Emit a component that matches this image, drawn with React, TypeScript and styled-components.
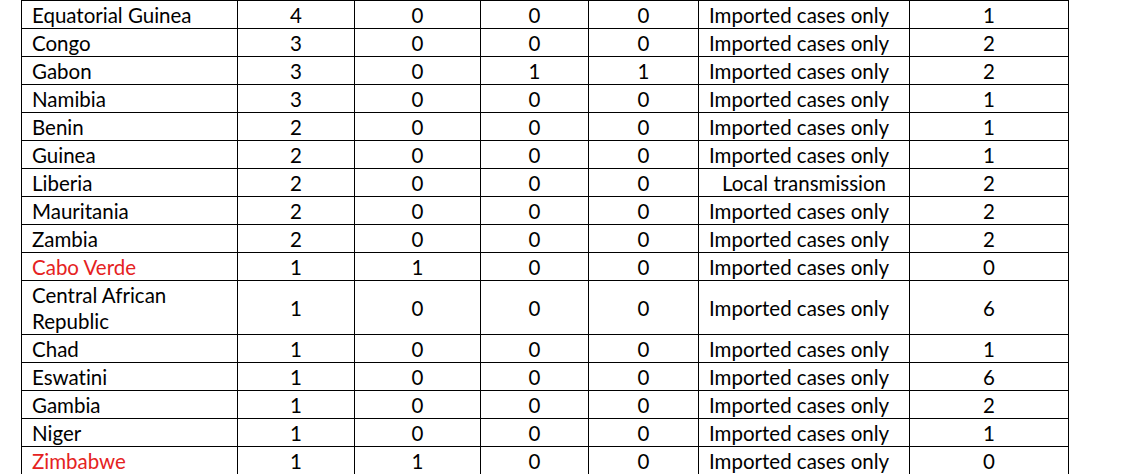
import React from 'react';
import styled, { createGlobalStyle } from 'styled-components';

type Row = {
    country: string;
    cases: number;
    imported: number;
    deaths: number;
    recovered: number;
    transmission: string;
    days: number;
    highlight?: boolean;
};

const rows: Row[] = [
    { country: 'Equatorial Guinea', cases: 4, imported: 0, deaths: 0, recovered: 0, transmission: 'Imported cases only', days: 1 },
    { country: 'Congo', cases: 3, imported: 0, deaths: 0, recovered: 0, transmission: 'Imported cases only', days: 2 },
    { country: 'Gabon', cases: 3, imported: 0, deaths: 1, recovered: 1, transmission: 'Imported cases only', days: 2 },
    { country: 'Namibia', cases: 3, imported: 0, deaths: 0, recovered: 0, transmission: 'Imported cases only', days: 1 },
    { country: 'Benin', cases: 2, imported: 0, deaths: 0, recovered: 0, transmission: 'Imported cases only', days: 1 },
    { country: 'Guinea', cases: 2, imported: 0, deaths: 0, recovered: 0, transmission: 'Imported cases only', days: 1 },
    { country: 'Liberia', cases: 2, imported: 0, deaths: 0, recovered: 0, transmission: 'Local transmission', days: 2 },
    { country: 'Mauritania', cases: 2, imported: 0, deaths: 0, recovered: 0, transmission: 'Imported cases only', days: 2 },
    { country: 'Zambia', cases: 2, imported: 0, deaths: 0, recovered: 0, transmission: 'Imported cases only', days: 2 },
    { country: 'Cabo Verde', cases: 1, imported: 1, deaths: 0, recovered: 0, transmission: 'Imported cases only', days: 0, highlight: true },
    { country: 'Central African Republic', cases: 1, imported: 0, deaths: 0, recovered: 0, transmission: 'Imported cases only', days: 6 },
    { country: 'Chad', cases: 1, imported: 0, deaths: 0, recovered: 0, transmission: 'Imported cases only', days: 1 },
    { country: 'Eswatini', cases: 1, imported: 0, deaths: 0, recovered: 0, transmission: 'Imported cases only', days: 6 },
    { country: 'Gambia', cases: 1, imported: 0, deaths: 0, recovered: 0, transmission: 'Imported cases only', days: 2 },
    { country: 'Niger', cases: 1, imported: 0, deaths: 0, recovered: 0, transmission: 'Imported cases only', days: 1 },
    { country: 'Zimbabwe', cases: 1, imported: 1, deaths: 0, recovered: 0, transmission: 'Imported cases only', days: 0, highlight: true },
];

// column widths measured off the grid lines
const widths = [216, 117, 126, 108, 110, 211, 159];

const App = () => {
    return (
        <>
            <GlobalStyle />
            <Page>
                <Table>
                    <colgroup>
                        {widths.map((w, i) => <col key={i} style={{ width: w }} />)}
                    </colgroup>
                    <tbody>
                        {rows.map(row => (
                            <tr key={row.country}>
                                <CountryCell $red={row.highlight}>
                                    {row.country === 'Central African Republic'
                                        ? <>Central African<br />Republic</>
                                        : row.country}
                                </CountryCell>
                                <NumberCell>{row.cases}</NumberCell>
                                <NumberCell>{row.imported}</NumberCell>
                                <NumberCell>{row.deaths}</NumberCell>
                                <NumberCell>{row.recovered}</NumberCell>
                                <TransmissionCell $center={row.transmission !== 'Imported cases only'}>
                                    {row.transmission}
                                </TransmissionCell>
                                <NumberCell>{row.days}</NumberCell>
                            </tr>
                        ))}
                    </tbody>
                </Table>
            </Page>
        </>
    );
};

export default App;

const GlobalStyle = createGlobalStyle`
    body {
        margin: 0;
        background: #ffffff;
    }
`;

const Page = styled.div`
    padding: 0 0 0 21px;
    width: 1125px;
    height: 474px;
    overflow: hidden;
    box-sizing: border-box;
`;

const Table = styled.table`
    border-collapse: collapse;
    table-layout: fixed;
    width: 1048px;
    font-family: Lato, "Liberation Sans", sans-serif;
    font-size: 20.5px;
    font-variant-ligatures: none;
    color: #000000;
`;

const Cell = styled.td`
    border: 1.5px solid #000000;
    height: 27px;
    padding: 1px 10px 0;
    line-height: 26px;
    vertical-align: middle;
    box-sizing: border-box;
    white-space: nowrap;
`;

const CountryCell = styled(Cell)<{ $red?: boolean }>`
    text-align: left;
    color: ${p => (p.$red ? '#e52222' : '#000000')};
`;

const NumberCell = styled(Cell)`
    text-align: center;
`;

const TransmissionCell = styled(Cell)<{ $center?: boolean }>`
    text-align: ${p => (p.$center ? 'center' : 'left')};
`;
